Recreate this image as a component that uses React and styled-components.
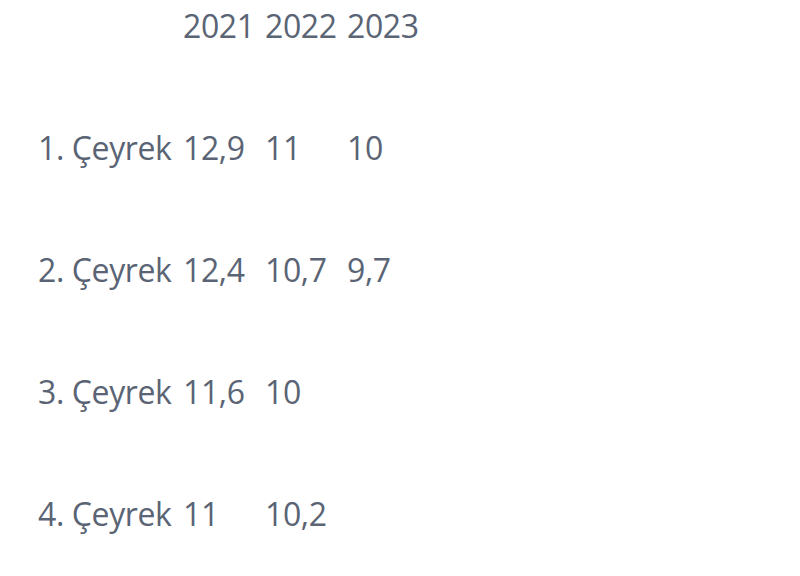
import React from "react";
import styled, { createGlobalStyle } from "styled-components";

const Global = createGlobalStyle`
  html, body { margin: 0; padding: 0; background: #ffffff; }
  body { font-family: "Open Sans", "Noto Sans", sans-serif; }
`;

const Table = styled.div`
  display: grid;
  grid-template-columns: 145px 82px 82px auto;
  grid-auto-rows: 44px;
  row-gap: 78px;
  padding: 4px 0 0 38px;
  color: #5a6474;
  font-size: 32px;
  line-height: 44px;
  letter-spacing: -0.4px;
`;

const Cell = styled.div`
  white-space: nowrap;
`;

const years = ["2021", "2022", "2023"];
const rows = [
  ["1. Çeyrek", "12,9", "11", "10"],
  ["2. Çeyrek", "12,4", "10,7", "9,7"],
  ["3. Çeyrek", "11,6", "10", ""],
  ["4. Çeyrek", "11", "10,2", ""],
];

export default function App() {
  return (
    <>
      <Global />
      <Table>
        <Cell />
        {years.map((y) => (
          <Cell key={y}>{y}</Cell>
        ))}
        {rows.map((r) =>
          r.map((c, i) => <Cell key={r[0] + i}>{c}</Cell>)
        )}
      </Table>
    </>
  );
}
